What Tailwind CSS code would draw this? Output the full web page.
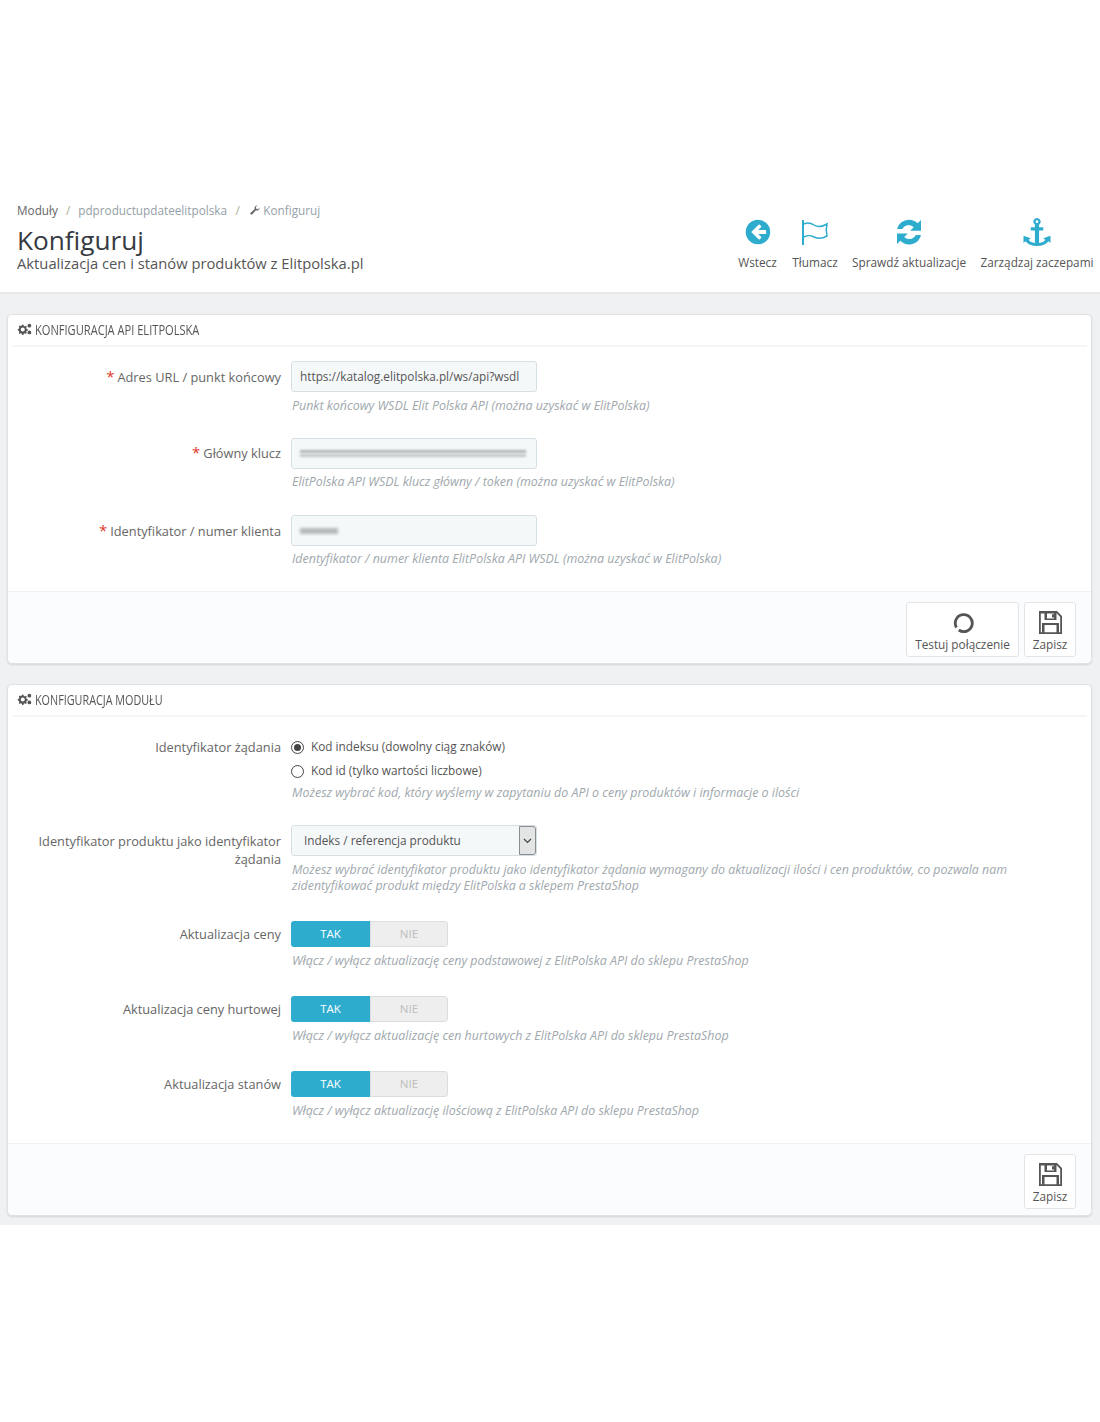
<!doctype html>
<html lang="pl">
	<head>
		<meta charset="UTF-8" />
		<title>Konfiguruj</title>
		<script src="https://cdn.jsdelivr.net/npm/@tailwindcss/browser@4"></script>
	</head>
	<body class="bg-white font-['Open_Sans',sans-serif] text-[#555] h-[1422px] overflow-hidden">
		<!-- Page header -->
		<header class="h-[294px] pt-[202px] border-b-2 border-[#e6e8ea] flex justify-between">
			<div class="pl-[17px]">
				<div class="flex items-center text-[11.75px] leading-[16px] text-[#959fa7]">
					<span class="text-[#666]">Moduły</span>
					<span class="mx-[8px] text-[#a8b08a]">/</span>
					<span>pdproductupdateelitpolska</span>
					<span class="mx-[8.500px] text-[#a8b08a]">/</span>
					<svg class="w-[10px] h-[10px] ml-[2px] mr-[3px]" viewBox="0 0 24 24" fill="#666"><path d="M23 6.5a6.5 6.5 0 0 1-8.7 6.1L5.6 22.3a2.8 2.8 0 0 1-4-3.9l9.8-8.7A6.5 6.5 0 0 1 18 1l-4 4 1 4 4 1 4-4z"/></svg>
					<span>Konfiguruj</span>
				</div>
				<h1 class="text-[26.200px] leading-[28px] mt-[8px] text-[#363a41]">Konfiguruj</h1>
				<p class="text-[14.750px] leading-[16px] mt-[1px] text-[#555]">Aktualizacja cen i stanów produktów z Elitpolska.pl</p>
			</div>
			<nav class="flex text-[11.800px] text-[#555] pr-[2px] pt-[16px]">
				<div class="w-[57px] flex flex-col items-center">
					<svg class="w-[28px] h-[28px]" viewBox="0 0 24 24" fill="#2eacce"><path d="M12 1.5a10.5 10.5 0 1 0 0 21 10.5 10.5 0 0 0 0-21zm6.2 12.2h-6l2.4 2.4a.8.8 0 0 1 0 1.1l-1 1a.8.8 0 0 1-1.1 0L6.2 12l6.300-6.200a.8.8 0 0 1 1.100 0l1 1a.8.8 0 0 1 0 1.100l-2.400 2.400h6a.8.8 0 0 1 .8.800v1.800a.8.8 0 0 1-.8.800z"/></svg>
					<span class="mt-[8px] leading-[16px]">Wstecz</span>
				</div>
				<div class="w-[60px] ml-[-1px] flex flex-col items-center">
					<svg class="w-[30px] h-[28px]" viewBox="0 0 30 28" fill="none" stroke="#2eacce" stroke-width="1.500"><path d="M3 2v25" stroke-width="2"/><path d="M4 6c4-2 7-1 10 1s8 2 13-1c-1 4-1 8 0 12-5 3-9 3-13 1s-6-2-10 0"/></svg>
					<span class="mt-[8px] leading-[16px]">Tłumacz</span>
				</div>
				<div class="w-[122px] ml-[3px] flex flex-col items-center">
					<div class="h-[28px] flex items-center">
						<svg class="w-[26px] h-[26px]" viewBox="3 3 18 18" fill="#2eacce"><path d="M12 3.500c2.300 0 4.400.9 6 2.400l2.300-2.200v7.500h-7.500l2.500-2.500A5 5 0 0 0 7.300 10H3.700A8.500 8.500 0 0 1 12 3.500zM3.700 13h7.500l-2.500 2.500a5 5 0 0 0 8-1.500h3.600A8.500 8.500 0 0 1 6 18.100l-2.300 2.200z"/></svg>
					</div>
					<span class="mt-[8px] leading-[16px]">Sprawdź aktualizacje</span>
				</div>
				<div class="w-[122px] flex flex-col items-center ml-[6px]">
					<svg class="w-[30px] h-[28px]" viewBox="2 0 26 27" fill="#2eacce"><path fill-rule="evenodd" d="M15 0a3.500 3.500 0 0 1 2 6.400V9h4v3h-4v12c3 0 5-1.500 6-3l-2-1.500 7-2.500v7l-2-1.500c-2 3-6 4.500-11 4.500s-9-1.500-11-4.500L2 24v-7l7 2.500L7 21c1 1.500 3 3 6 3V12H9V9h4V6.400A3.500 3.500 0 0 1 15 0zm0 2.200a1.300 1.300 0 1 0 0 2.600 1.300 1.300 0 0 0 0-2.600z"/></svg>
					<span class="mt-[8px] leading-[16px]">Zarządzaj zaczepami</span>
				</div>
			</nav>
		</header>

		<main class="bg-[#eff1f2] h-[931px] px-[7px] pt-[20px]">
			<!-- API panel -->
			<section class="w-[1085px] h-[350px] bg-white rounded-[5px] border border-[#dfe3e6] shadow-[0_1px_2px_rgba(0,0,0,0.12)] flex flex-col">
				<div class="mx-[4px] h-[32px] shrink-0 border-b-2 border-[#f4f6f7] flex items-center pl-[5px] pb-[2px]">
					<svg class="w-[15px] h-[12px] mr-[3px] shrink-0" viewBox="0 0 20 16" fill="#555"><path fill-rule="evenodd" d="M7 2l1.500.3.500 1.500 1.500.7 1.400-.7 1.100 1.100-.7 1.500.6 1.500 1.500.5v1.600l-1.500.5-.6 1.500.7 1.400-1.100 1.100-1.400-.7-1.500.6-.5 1.500H6.900l-.5-1.500-1.500-.6-1.400.7-1.100-1.100.7-1.400-.6-1.500L1 9.500V8l1.500-.5.600-1.500-.7-1.500 1.100-1.100 1.400.7 1.500-.7.500-1.500zm.7 4a2.700 2.700 0 1 0 0 5.400 2.700 2.700 0 0 0 0-5.400z"/><circle cx="16.500" cy="3.500" r="2.500"/><circle cx="16.500" cy="12.500" r="2.500"/></svg>
					<h2 class="text-[15px] font-medium text-[#555] origin-left scale-x-[0.74] whitespace-nowrap">KONFIGURACJA API ELITPOLSKA</h2>
				</div>
				<div class="flex-1 min-h-0 pt-[14px]">
					<div class="h-[77px] flex">
						<label class="w-[273px] text-right text-[12.800px] leading-[18px] pt-[6px] text-[#666]"><span class="text-[#e0392c] mr-[3px] text-[15px]">*</span>Adres URL / punkt końcowy</label>
						<div class="ml-[10px]">
							<div class="w-[246px] h-[31px] bg-[#f5f8f9] border border-[#d6e0e4] rounded-[3px] px-[8px] flex items-center text-[11.800px] text-[#555]">https://katalog.elitpolska.pl/ws/api?wsdl</div>
							<p class="mt-[6px] ml-[1px] text-[12.450px] leading-[16px] italic text-[#a0a8ad]">Punkt końcowy WSDL Elit Polska API (można uzyskać w ElitPolska)</p>
						</div>
					</div>
					<div class="h-[77px] flex">
						<label class="w-[273px] text-right text-[12.800px] leading-[18px] pt-[5px] text-[#666]"><span class="text-[#e0392c] mr-[3px] text-[15px]">*</span>Główny klucz</label>
						<div class="ml-[10px]">
							<div class="w-[246px] h-[31px] bg-[#f5f8f9] border border-[#d6e0e4] rounded-[3px] px-[8px] flex flex-col justify-center gap-[1px]">
								<div class="w-[226px] h-[3px] bg-[#b0b4b6] blur-[1px]"></div>
								<div class="w-[226px] h-[3px] bg-[#c4c7c8] blur-[1px]"></div>
							</div>
							<p class="mt-[5px] ml-[1px] text-[12.450px] leading-[16px] italic text-[#a0a8ad]">ElitPolska API WSDL klucz główny / token (można uzyskać w ElitPolska)</p>
						</div>
					</div>
					<div class="h-[75px] flex">
						<label class="w-[273px] text-right text-[12.800px] leading-[18px] pt-[6px] text-[#666]"><span class="text-[#e0392c] mr-[3px] text-[15px]">*</span>Identyfikator / numer klienta</label>
						<div class="ml-[10px]">
							<div class="w-[246px] h-[31px] bg-[#f5f8f9] border border-[#d6e0e4] rounded-[3px] px-[8px] flex items-center">
								<div class="w-[38px] h-[6px] bg-[#b5b9bb] blur-[1.500px]"></div>
							</div>
							<p class="mt-[5px] ml-[1px] text-[12.450px] leading-[16px] italic text-[#a0a8ad]">Identyfikator / numer klienta ElitPolska API WSDL (można uzyskać w ElitPolska)</p>
						</div>
					</div>
				</div>
				<div class="h-[72px] shrink-0 bg-[#fbfcfd] border-t border-[#eef0f2] rounded-b-[5px] flex justify-end items-start pt-[10px] pr-[15px] gap-[5px]">
					<button class="w-[113px] h-[55px] bg-white border border-[#e2e5e8] rounded-[3px] flex flex-col items-center text-[11.800px] text-[#555]">
						<svg class="w-[22px] h-[22px] mt-[9px]" viewBox="0 0 22 22" fill="none" stroke="#555" stroke-width="2.800"><path d="M4.500 15.500a8.500 8.500 0 1 1 2.300 2.500"/></svg>
						<span class="mt-[2px] leading-[16px]">Testuj połączenie</span>
					</button>
					<button class="w-[52px] h-[55px] bg-white border border-[#e2e5e8] rounded-[3px] flex flex-col items-center text-[11.800px] text-[#555]">
						<svg class="w-[25px] h-[25px] mt-[7px]" viewBox="0 0 25 25" fill="#555"><path fill-rule="evenodd" d="M1 1h18l5 5v18H1zm3 2.500H2.800v18.800H4V13h17v9.300h1.200V7L18.500 3v7H6.500V3.500zm5 0v5h7v-5zm5 .7h2v3.300h-2zM6.500 15v7.300h12V15z"/></svg>
						<span class="mt-[1px] leading-[16px]">Zapisz</span>
					</button>
				</div>
			</section>

			<!-- Module panel -->
			<section class="w-[1085px] h-[532px] mt-[20px] bg-white rounded-[5px] border border-[#dfe3e6] shadow-[0_1px_2px_rgba(0,0,0,0.12)] flex flex-col">
				<div class="mx-[4px] h-[32px] shrink-0 border-b-2 border-[#f4f6f7] flex items-center pl-[5px] pb-[2px]">
					<svg class="w-[15px] h-[12px] mr-[3px] shrink-0" viewBox="0 0 20 16" fill="#555"><path fill-rule="evenodd" d="M7 2l1.500.3.500 1.500 1.500.7 1.400-.7 1.100 1.100-.7 1.500.6 1.500 1.500.5v1.600l-1.500.5-.6 1.500.7 1.400-1.100 1.100-1.400-.7-1.500.6-.5 1.500H6.900l-.5-1.500-1.500-.6-1.400.7-1.100-1.100.7-1.400-.6-1.500L1 9.500V8l1.500-.5.600-1.500-.7-1.500 1.100-1.100 1.400.7 1.500-.7.500-1.500zm.7 4a2.700 2.700 0 1 0 0 5.400 2.700 2.700 0 0 0 0-5.400z"/><circle cx="16.500" cy="3.500" r="2.500"/><circle cx="16.500" cy="12.500" r="2.500"/></svg>
					<h2 class="text-[15px] font-medium text-[#555] origin-left scale-x-[0.72] whitespace-nowrap">KONFIGURACJA MODUŁU</h2>
				</div>
				<div class="flex-1 min-h-0 pt-[21px]">
					<div class="h-[87px] flex">
						<label class="w-[273px] text-right text-[12.800px] leading-[18px] text-[#666]">Identyfikator żądania</label>
						<div class="ml-[10px] text-[11.800px] text-[#555]">
							<div class="flex items-center h-[18px]">
								<span class="w-[13px] h-[13px] rounded-full border border-[#444] flex items-center justify-center"><span class="w-[7px] h-[7px] rounded-full bg-[#444]"></span></span>
								<span class="ml-[7px]">Kod indeksu (dowolny ciąg znaków)</span>
							</div>
							<div class="flex items-center h-[18px] mt-[6px]">
								<span class="w-[13px] h-[13px] rounded-full border border-[#444]"></span>
								<span class="ml-[7px]">Kod id (tylko wartości liczbowe)</span>
							</div>
							<p class="mt-[5px] ml-[1px] text-[12.450px] leading-[16px] italic text-[#a0a8ad]">Możesz wybrać kod, który wyślemy w zapytaniu do API o ceny produktów i informacje o ilości</p>
						</div>
					</div>
					<div class="h-[96px] flex">
						<label class="w-[273px] text-right text-[12.800px] leading-[18px] pt-[7px] text-[#666]">Identyfikator produktu jako identyfikator żądania</label>
						<div class="ml-[10px]">
							<div class="w-[246px] h-[31px] bg-[#f5f8f9] border border-[#d6e0e4] rounded-[3px] pl-[12px] flex items-center text-[11.800px] text-[#555] relative">
								Indeks / referencja produktu
								<span class="absolute right-0 top-0 bottom-0 w-[17px] bg-[#e3e4e4] border border-[#8a8d8e] rounded-r-[3px] flex items-center justify-center">
									<svg class="w-[9px] h-[6px]" viewBox="0 0 9 6" fill="none" stroke="#444" stroke-width="1.200"><path d="M1 1l3.500 3.500L8 1"/></svg>
								</span>
							</div>
							<p class="mt-[6px] ml-[1px] w-[725px] text-[12.370px] leading-[16px] italic text-[#a0a8ad]">Możesz wybrać identyfikator produktu jako identyfikator żądania wymagany do aktualizacji ilości i cen produktów, co pozwala nam zidentyfikować produkt między ElitPolska a sklepem PrestaShop</p>
						</div>
					</div>
					<div class="h-[75px] flex">
						<label class="w-[273px] text-right text-[12.800px] leading-[18px] pt-[4px] text-[#666]">Aktualizacja ceny</label>
						<div class="ml-[10px]">
							<div class="w-[157px] h-[26px] flex rounded-[3px] overflow-hidden text-[11.500px]">
								<span class="w-[79px] bg-[#2eacce] text-white flex items-center justify-center">TAK</span>
								<span class="flex-1 bg-[#eeeeee] border border-[#dddddd] rounded-r-[3px] text-[#bdbdbd] flex items-center justify-center">NIE</span>
							</div>
							<p class="mt-[6px] ml-[1px] text-[12.450px] leading-[16px] italic text-[#a0a8ad]">Włącz / wyłącz aktualizację ceny podstawowej z ElitPolska API do sklepu PrestaShop</p>
						</div>
					</div>
					<div class="h-[75px] flex">
						<label class="w-[273px] text-right text-[12.800px] leading-[18px] pt-[4px] text-[#666]">Aktualizacja ceny hurtowej</label>
						<div class="ml-[10px]">
							<div class="w-[157px] h-[26px] flex rounded-[3px] overflow-hidden text-[11.500px]">
								<span class="w-[79px] bg-[#2eacce] text-white flex items-center justify-center">TAK</span>
								<span class="flex-1 bg-[#eeeeee] border border-[#dddddd] rounded-r-[3px] text-[#bdbdbd] flex items-center justify-center">NIE</span>
							</div>
							<p class="mt-[6px] ml-[1px] text-[12.450px] leading-[16px] italic text-[#a0a8ad]">Włącz / wyłącz aktualizację cen hurtowych z ElitPolska API do sklepu PrestaShop</p>
						</div>
					</div>
					<div class="h-[70px] flex">
						<label class="w-[273px] text-right text-[12.800px] leading-[18px] pt-[4px] text-[#666]">Aktualizacja stanów</label>
						<div class="ml-[10px]">
							<div class="w-[157px] h-[26px] flex rounded-[3px] overflow-hidden text-[11.500px]">
								<span class="w-[79px] bg-[#2eacce] text-white flex items-center justify-center">TAK</span>
								<span class="flex-1 bg-[#eeeeee] border border-[#dddddd] rounded-r-[3px] text-[#bdbdbd] flex items-center justify-center">NIE</span>
							</div>
							<p class="mt-[6px] ml-[1px] text-[12.450px] leading-[16px] italic text-[#a0a8ad]">Włącz / wyłącz aktualizację ilościową z ElitPolska API do sklepu PrestaShop</p>
						</div>
					</div>
				</div>
				<div class="h-[72px] shrink-0 bg-[#fbfcfd] border-t border-[#eef0f2] rounded-b-[5px] flex justify-end items-start pt-[10px] pr-[15px]">
					<button class="w-[52px] h-[55px] bg-white border border-[#e2e5e8] rounded-[3px] flex flex-col items-center text-[11.800px] text-[#555]">
						<svg class="w-[25px] h-[25px] mt-[7px]" viewBox="0 0 25 25" fill="#555"><path fill-rule="evenodd" d="M1 1h18l5 5v18H1zm3 2.500H2.800v18.800H4V13h17v9.300h1.200V7L18.500 3v7H6.500V3.500zm5 0v5h7v-5zm5 .7h2v3.300h-2zM6.500 15v7.300h12V15z"/></svg>
						<span class="mt-[1px] leading-[16px]">Zapisz</span>
					</button>
				</div>
			</section>
		</main>
	</body>
</html>
